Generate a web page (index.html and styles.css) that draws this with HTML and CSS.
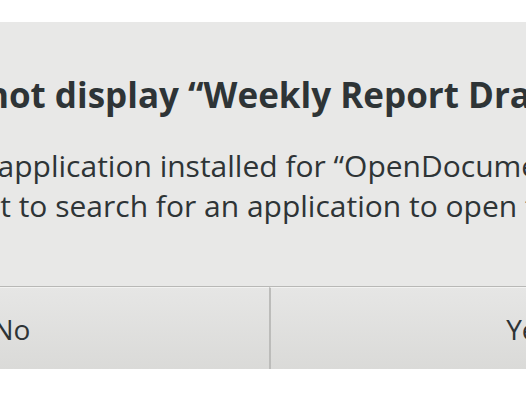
FILE: index.html
```html
<!DOCTYPE html>
<html lang="en">
<head>
    <meta charset="UTF-8">
    <meta name="viewport" content="width=device-width, initial-scale=1.0">
    <title>Could not display</title>
    <link rel="stylesheet" href="styles.css">
</head>
<body>
    <div class="topbar"></div>
    <div class="dialog">
        <!-- Message area -->
        <div class="content">
            <h1 class="title">Could not display “Weekly Report Draft.odt”.</h1>
            <p class="message">There is no application installed for “OpenDocument Text” files.<br>Do you want to search for an application to open this file?</p>
        </div>
        <!-- Action buttons -->
        <div class="actions">
            <button class="btn">No</button>
            <button class="btn">Yes</button>
        </div>
    </div>
</body>
</html>
```

FILE: styles.css
```css
* {
    box-sizing: border-box;
    margin: 0;
    padding: 0;
    font-family: "Open Sans", sans-serif;
}
body {
    background-color: #fff;
    overflow: hidden;
    height: 100vh;
}
.topbar {
    height: 22px;
    background-color: #fff;
}
.dialog {
    width: 1032px;
    margin-left: -246px;
    background-color: #e8e8e7;
    color: #2e3436;
}
.content {
    height: 264px;
    padding: 51px 0 0 81px;
}
.title {
    margin-left: 42px;
    font-size: 35px;
    font-weight: bold;
    line-height: 44px;
    white-space: nowrap;
}
.message {
    margin-top: 29px;
    font-size: 30px;
    line-height: 40px;
    white-space: nowrap;
}
.actions {
    display: flex;
    height: 83px;
    border-top: 1px solid #b8b8b6;
}
.btn {
    flex: 1;
    border: none;
    border-top: 1px solid #f2f2f1;
    background: linear-gradient(#e6e6e5, #dadad8);
    color: #2e3436;
    font-size: 28px;
}
.btn + .btn {
    border-left: 2px solid #bcbcba;
}
```
